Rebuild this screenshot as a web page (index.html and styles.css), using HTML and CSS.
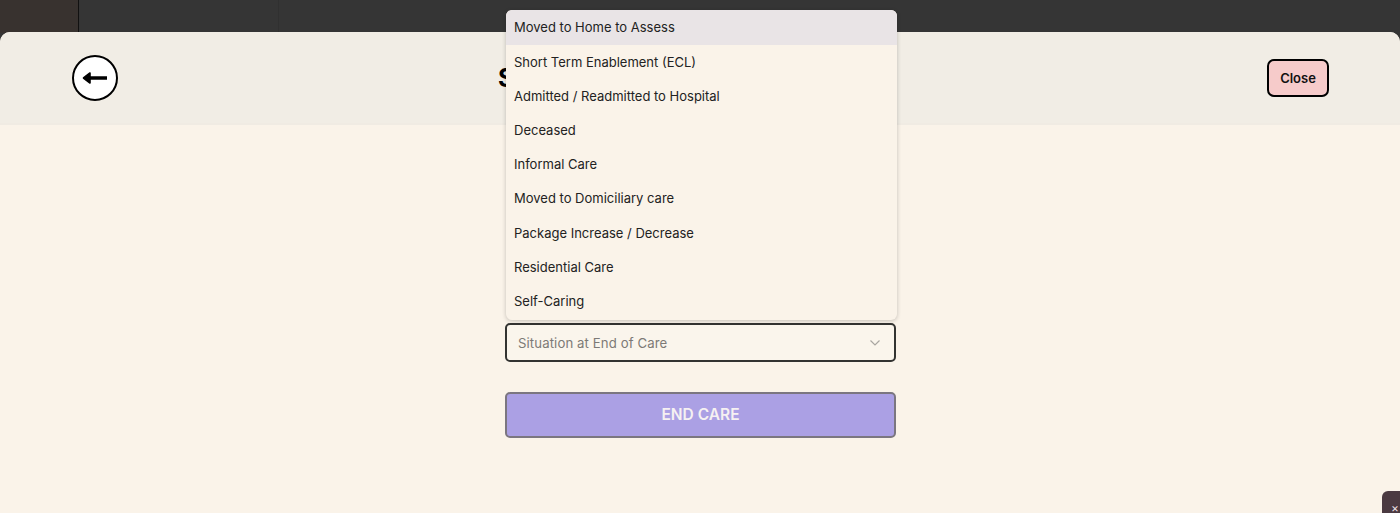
FILE: index.html
```html
<!DOCTYPE html>
<html lang="en">
<head>
<meta charset="utf-8">
<title>End Care</title>
<link rel="stylesheet" href="styles.css">
</head>
<body>
<div class="backdrop">
  <div class="bg-col bg-col-a"></div>
  <div class="bg-col bg-col-b"></div>
  <div class="bg-col bg-col-c"></div>
</div>
<main class="modal">
  <header class="modal-head">
    <button class="back" aria-label="Back">
      <svg width="26" height="14" viewBox="0 0 26 14"><path d="M8 7H25" stroke="#000" stroke-width="3.6" fill="none"/><path d="M1.5 7L8 2V12Z" fill="#000" stroke="#000" stroke-width="1.6" stroke-linejoin="round"/></svg>
    </button>
    <h1 class="title">Select a Situation at End of Care</h1>
    <button class="close">Close</button>
  </header>
  <section class="modal-body">
    <div class="select">
      <span>Situation at End of Care</span>
      <svg width="12" height="8" viewBox="0 0 12 8"><path d="M1.5 1.5L6 6L10.5 1.5" stroke="#a9a6a1" stroke-width="1.2" fill="none"/></svg>
    </div>
    <button class="end">END CARE</button>
  </section>
</main>
<ul class="menu">
  <li class="active">Moved to Home to Assess</li>
  <li>Short Term Enablement (ECL)</li>
  <li>Admitted / Readmitted to Hospital</li>
  <li>Deceased</li>
  <li>Informal Care</li>
  <li>Moved to Domiciliary care</li>
  <li>Package Increase / Decrease</li>
  <li>Residential Care</li>
  <li>Self-Caring</li>
</ul>
<div class="chat"><span>×</span></div>
</body>
</html>
```
FILE: styles.css
```css
* { box-sizing: border-box; }
html, body { margin: 0; height: 513px; overflow: hidden; }
body { background: #353535; font-family: Inter, "Liberation Sans", sans-serif; position: relative; }
.backdrop { display: flex; height: 33px; }
.bg-col { height: 100%; }
.bg-col-a { width: 79px; background: #38322f; border-right: 1px solid #111; }
.bg-col-b { width: 200px; background: #353535; border-right: 1px solid #303030; }
.bg-col-c { flex: 1; background: #353535; }
.modal { position: absolute; left: 0; right: 0; top: 32px; bottom: 0; border-radius: 10px 10px 0 0; overflow: hidden; background: #faf3e9; display: flex; flex-direction: column; }
.modal-head { height: 93px; background: #f1ede5; border-bottom: 2px solid #f0ebe3; padding: 0 71px 0 72px; display: flex; align-items: center; justify-content: space-between; }
.back { width: 46px; height: 46px; border-radius: 50%; border: 2px solid #000; background: #fff; padding: 0 0 0 2px; display: flex; align-items: center; justify-content: center; }
.back svg { margin-right: 3px; }
.title { margin: 0; font-size: 25px; line-height: 30px; font-weight: 700; color: #000; }
.close { width: 62px; height: 38px; border: 2px solid #000; border-radius: 7px; background: #f6cbca; font: 600 13px Inter, "Liberation Sans", sans-serif; color: #111; padding: 0; }
.modal-body { flex: 1; padding: 198px 0 0 505px; display: flex; flex-direction: column; gap: 30px; }
.select { width: 391px; height: 39px; border: 2px solid #333331; border-radius: 5px; background: #faf5ec; display: flex; align-items: center; justify-content: space-between; padding: 0 13px 0 11px; color: #7d7a76; font-size: 13.2px; letter-spacing: .1px; }
.end { width: 391px; height: 46px; border: 2px solid #7b7680; border-radius: 5px; background: #aba0e4; color: #f6f1f2; font: 600 15.5px/38px Inter, "Liberation Sans", sans-serif; padding: 0; }
.menu { position: absolute; left: 506px; top: 10px; width: 391px; height: 310px; margin: 0; padding: 0; list-style: none; background: #faf3e9; border-radius: 6px; box-shadow: 0 1px 4px rgba(0,0,0,.22); overflow: hidden; }
.menu li { height: 34.2px; line-height: 35px; padding-left: 8px; font-size: 13px; color: #222; }
.menu .active { background: #e9e4e6; height: 34.6px; }
.chat { position: absolute; left: 1382px; top: 491px; width: 18px; height: 22px; border-radius: 6px 0 0 0; background: #4b3a41; color: #e8dfe0; font-size: 12px; line-height: 17px; padding: 8px 0 0 9px; }
```
